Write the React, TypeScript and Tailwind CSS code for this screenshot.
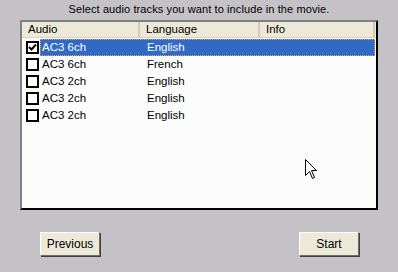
import { FC } from "react";

const TRACKS = [
  { audio: "AC3 6ch", language: "English", checked: true, selected: true },
  { audio: "AC3 6ch", language: "French", checked: false, selected: false },
  { audio: "AC3 2ch", language: "English", checked: false, selected: false },
  { audio: "AC3 2ch", language: "English", checked: false, selected: false },
  { audio: "AC3 2ch", language: "English", checked: false, selected: false },
] as const;

const FONT = "font-['Liberation_Sans',Arial,sans-serif]";

const CheckBox: FC<{ checked: boolean }> = ({ checked }) => (
  <div className="w-[13px] h-[13px] border-2 border-black bg-white flex items-center justify-center shrink-0">
    {checked ? (
      <svg width="9" height="9" viewBox="0 0 9 9">
        <path d="M1 4 L3.5 6.5 L8 1.5" stroke="black" strokeWidth="2" fill="none" />
      </svg>
    ) : null}
  </div>
);

const Button: FC<{ label: string }> = ({ label }) => (
  <button className="w-[60px] h-[24px] bg-[#ece9d8] text-[12px] text-black border border-t-white border-l-white border-r-[#716f64] border-b-[#716f64] shadow-[1px_1px_0_#404040]">
    {label}
  </button>
);

const App: FC = () => {
  return (
    <div className={`relative w-[398px] h-[272px] bg-[#c4c2c6] ${FONT} text-[11.5px] text-black overflow-hidden`}>
      <div className="h-[20px] flex items-center justify-center pb-[2px] text-[11px] tracking-[0.1px]">
        Select audio tracks you want to include in the movie.
      </div>
      <div className="mx-[20px] h-[190px] border-2 border-black border-t-[#808080] border-l-[#808080] bg-[#fcfcfc] flex flex-col">
        <div className="h-[16px] flex bg-[#ece9d8] border-b border-[#d6d2c2] pr-[1px]">
          <div className="w-[118px] pl-[6px] leading-[15px] border-r-2 border-r-[#cfcbb8]">Audio</div>
          <div className="w-[120px] pl-[6px] leading-[15px] border-r-2 border-r-[#cfcbb8]">Language</div>
          <div className="flex-1 pl-[6px] leading-[15px] border-r-2 border-r-[#cfcbb8]">Info</div>
        </div>
        <div className="flex flex-col pt-[1px]">
          {TRACKS.map((track, index) => (
            <div key={`track-${index}`} className="h-[17px] flex items-center pl-[4px] pr-[1px]">
              <CheckBox checked={track.checked} />
              <div
                className={`flex-1 h-[17px] flex items-center ml-[1px] ${
                  track.selected ? "bg-[#316ac5] text-white outline outline-1 outline-dotted outline-[#e0a060] -outline-offset-1" : ""
                }`}
              >
                <span className="w-[106px] pl-[2px]">{track.audio}</span>
                <span className="pl-[1px]">{track.language}</span>
              </div>
            </div>
          ))}
        </div>
      </div>
      <div className="flex justify-between pl-[40px] pt-[22px] pr-[39px]">
        <Button label="Previous" />
        <Button label="Start" />
      </div>
      {/* mouse pointer */}
      <svg className="absolute left-[305px] top-[159px]" width="14" height="22" viewBox="0 0 14 22">
        <path
          d="M0.5 0.5 L0.5 16.5 L4.5 12.5 L7.5 19.5 L9.5 18.5 L6.5 11.5 L11.5 11.5 Z"
          fill="white"
          stroke="black"
          strokeWidth="1"
        />
      </svg>
    </div>
  );
};

export default App;
